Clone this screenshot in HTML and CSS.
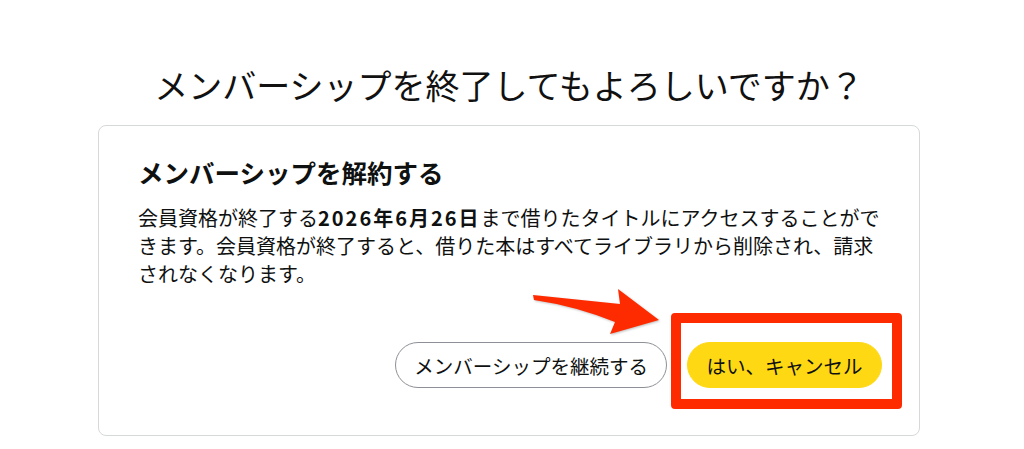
FILE: index.html
```html
<!DOCTYPE html>
<html lang="ja">
<head>
<meta charset="utf-8">
<title>メンバーシップの終了</title>
<link rel="stylesheet" href="styles.css">
</head>
<body>
<main class="page">
  <h1 class="title">メンバーシップを終了してもよろしいですか？</h1>
  <section class="card">
    <h2 class="card-heading">メンバーシップを解約する</h2>
    <p class="card-text">会員資格が終了する<strong class="date">2026年6月26日</strong>まで借りたタイトルにアクセスすることができます。会員資格が終了すると、借りた本はすべてライブラリから削除され、請求されなくなります。</p>
    <div class="actions">
      <button class="btn btn-outline" type="button">メンバーシップを継続する</button>
      <button class="btn btn-primary" type="button">はい、キャンセル</button>
    </div>
    <svg class="arrow" viewBox="0 0 150 60" width="150" height="60" aria-hidden="true">
      <path d="M13,15 L100,24 L98,9 L139,40 L90,54 L95,42 Q55,26 14,20 Z" fill="#ff2b00"/>
    </svg>
    <div class="highlight" aria-hidden="true"></div>
  </section>
</main>
</body>
</html>
```

FILE: styles.css
```css
* {
  box-sizing: border-box;
}

html, body {
  margin: 0;
  padding: 0;
  background: #ffffff;
}

body {
  font-family: "Noto Sans CJK JP", "Noto Sans", "Liberation Sans", sans-serif;
  color: #0f1111;
}

.page {
  width: 822px;
  margin-left: 98px;
  padding-top: 64px;
}

.title {
  margin: 0 0 20px;
  font-size: 34px;
  line-height: 41px;
  font-weight: 400;
  text-align: center;
  color: #111111;
}

.card {
  position: relative;
  height: 311px;
  border: 1px solid #d5d9d9;
  border-radius: 8px;
  padding: 28px 36px 0 39px;
}

.card-heading {
  margin: 0;
  font-size: 25.5px;
  line-height: 35px;
  font-weight: 700;
}

.card-text {
  margin: 15px 0 0;
  font-size: 20px;
  line-height: 28px;
}

.date {
  font-weight: 700;
  letter-spacing: 2px;
}

.actions {
  display: flex;
  justify-content: flex-end;
  gap: 20px;
  margin-top: 54px;
  margin-right: 1px;
}

.btn {
  height: 46px;
  border-radius: 23px;
  font-family: inherit;
  font-size: 19.5px;
  color: #0f1111;
  cursor: pointer;
}

.btn-outline {
  background: #ffffff;
  border: 1px solid #8d9096;
  padding: 0 18px;
}

.btn-primary {
  background: #ffd814;
  border: 1px solid #ffd814;
  padding: 0 18.5px;
}

.arrow {
  position: absolute;
  left: 421px;
  top: 154px;
  filter: drop-shadow(1px 1px 1px rgba(0, 0, 0, 0.25));
}

.highlight {
  position: absolute;
  left: 572px;
  top: 187px;
  width: 231px;
  height: 96px;
  border: 10px solid #ff2b00;
  border-radius: 4px;
}
```
